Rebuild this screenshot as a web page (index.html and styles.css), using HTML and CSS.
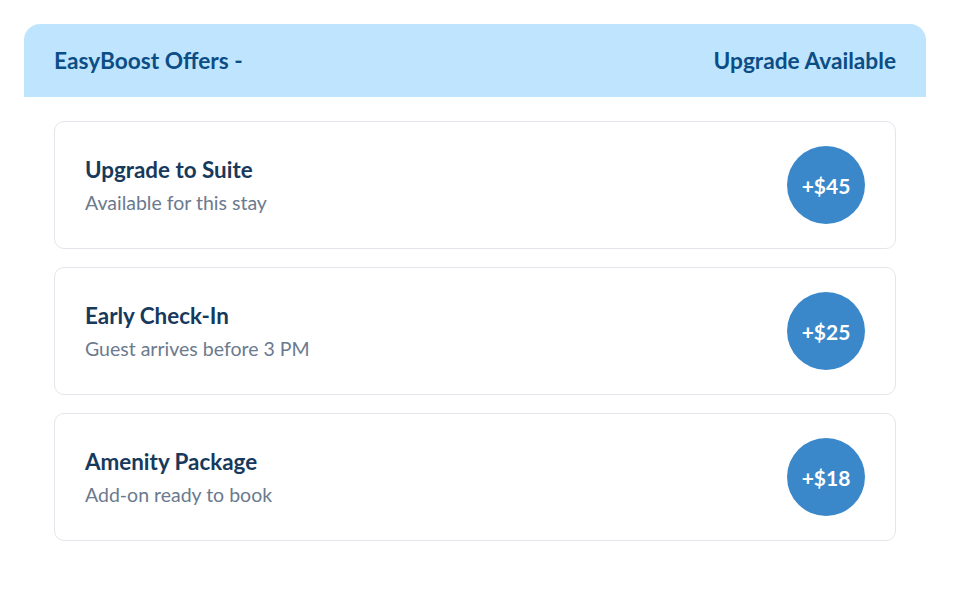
FILE: index.html
```html
<!DOCTYPE html>
<html lang="en">
<head>
<meta charset="utf-8">
<title>EasyBoost Offers</title>
<link rel="stylesheet" href="styles.css">
</head>
<body>
<section class="panel">
  <header class="panel-head">
    <h1 class="panel-title">EasyBoost Offers -</h1>
    <span class="panel-status">Upgrade Available</span>
  </header>
  <div class="offer-list">
    <article class="offer">
      <div class="offer-text">
        <h2 class="offer-name">Upgrade to Suite</h2>
        <p class="offer-note">Available for this stay</p>
      </div>
      <div class="offer-price">+$45</div>
    </article>
    <article class="offer">
      <div class="offer-text">
        <h2 class="offer-name">Early Check-In</h2>
        <p class="offer-note">Guest arrives before 3 PM</p>
      </div>
      <div class="offer-price">+$25</div>
    </article>
    <article class="offer">
      <div class="offer-text">
        <h2 class="offer-name">Amenity Package</h2>
        <p class="offer-note">Add-on ready to book</p>
      </div>
      <div class="offer-price">+$18</div>
    </article>
  </div>
</section>
</body>
</html>
```
FILE: styles.css
```css
* { box-sizing: border-box; }

html, body {
  margin: 0;
  background: #ffffff;
}

body {
  padding: 24px 34px 24px 24px;
  font-family: Lato, "Noto Sans", sans-serif;
}

.panel {
  width: 902px;
}

.panel-head {
  height: 73px;
  display: flex;
  align-items: center;
  justify-content: space-between;
  padding: 0 30px;
  background: #bee5fd;
  border-radius: 16px 16px 0 0;
  color: #0d4d86;
}

.panel-title,
.panel-status {
  margin: 0;
  font-size: 22.7px;
  font-weight: 700;
}

.offer-list {
  display: flex;
  flex-direction: column;
  gap: 18px;
  padding: 24px 30px;
}

.offer {
  height: 128px;
  display: flex;
  align-items: center;
  justify-content: space-between;
  padding: 24px 30px;
  border: 1px solid #e3e7ec;
  border-radius: 10px;
  background: #ffffff;
}

.offer-name {
  margin: 0 0 8px;
  font-size: 22.4px;
  font-weight: 700;
  color: #17395c;
}

.offer-note {
  margin: 0;
  font-size: 19.5px;
  color: #6b7a8e;
}

.offer-price {
  width: 78px;
  height: 78px;
  border-radius: 50%;
  background: #3a88c9;
  color: #ffffff;
  display: flex;
  align-items: center;
  justify-content: center;
  font-size: 21px;
  font-weight: 700;
}
```
